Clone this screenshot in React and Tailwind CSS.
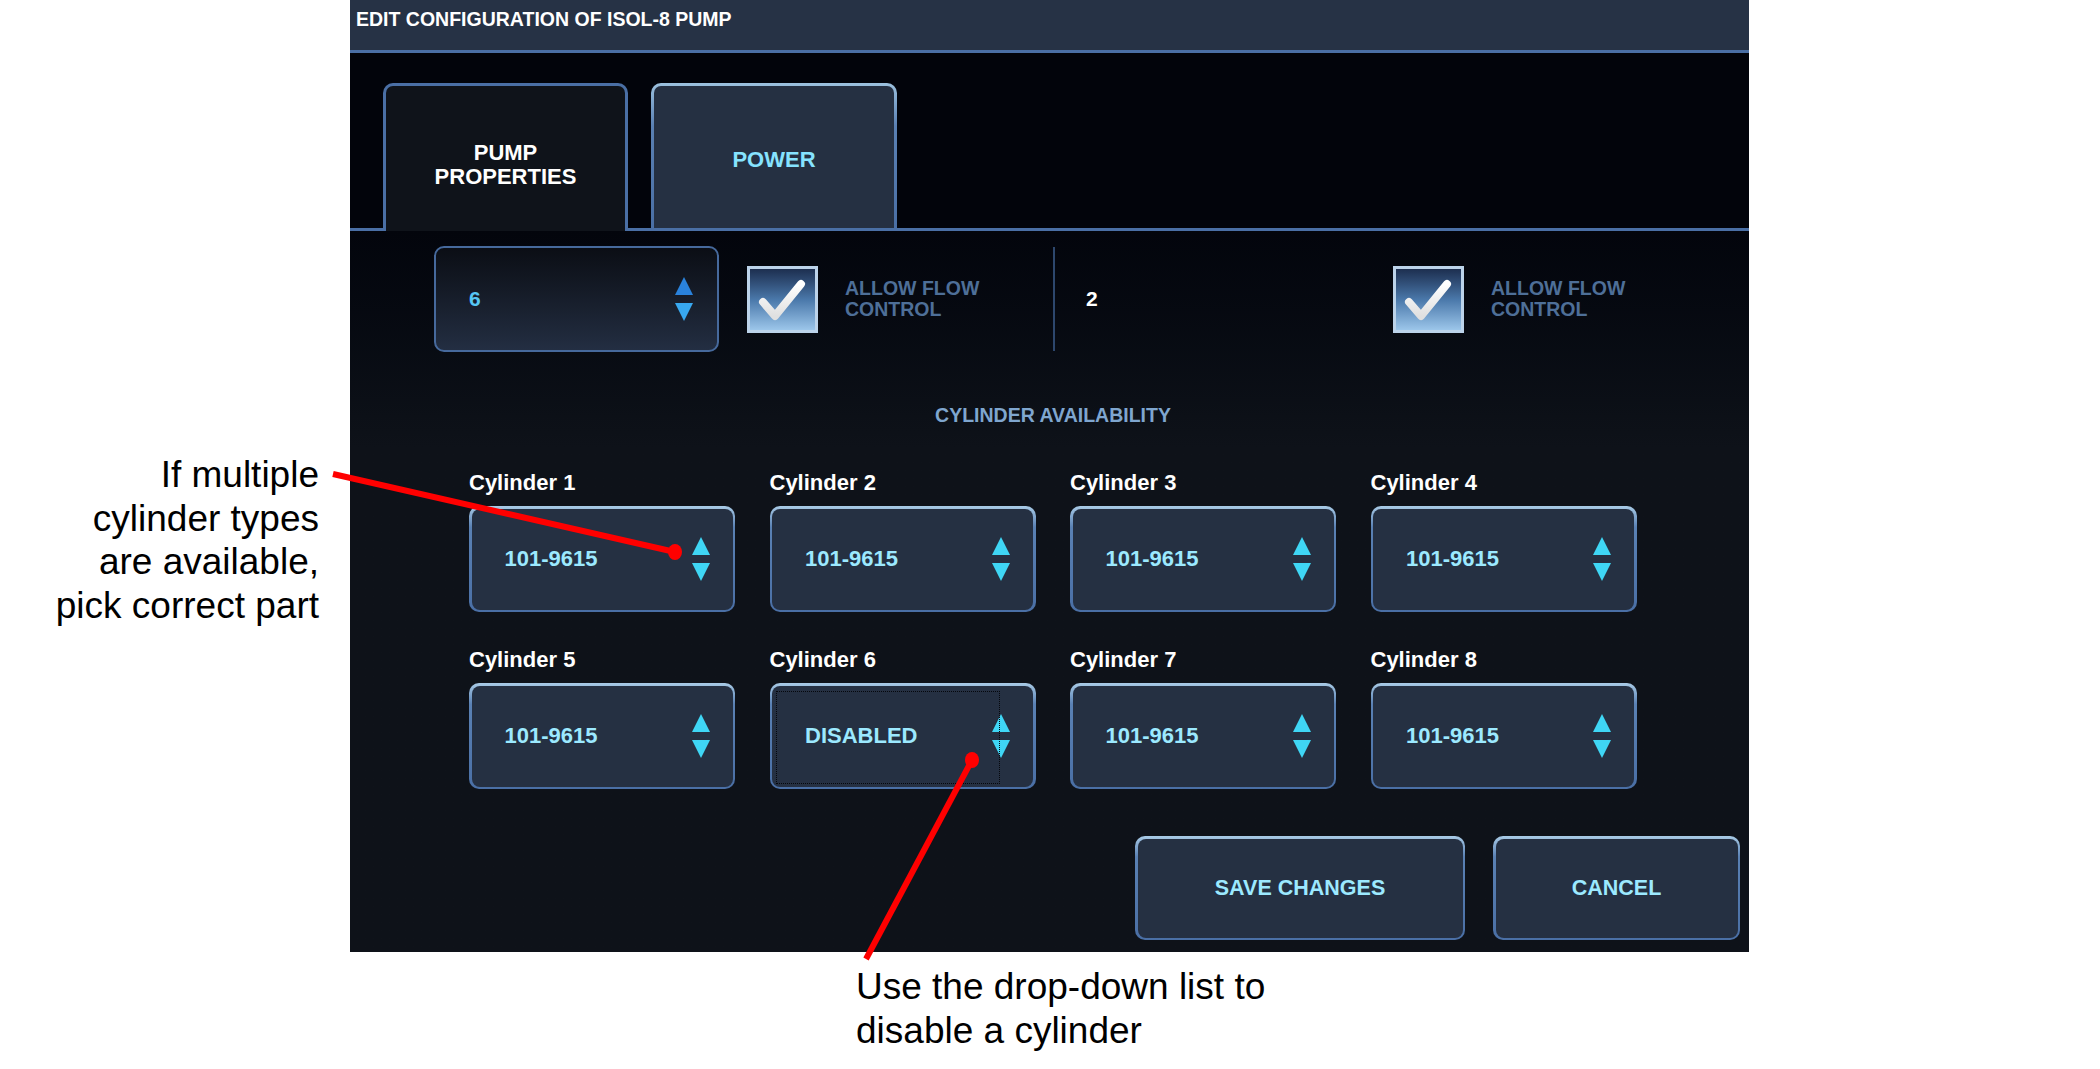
import React from "react";

function Arrows({ up = "#3fd6f5", down = "#3fd6f5" }) {
  return (
    <div className="flex flex-col items-center gap-[8px]">
      <svg width="18" height="18" viewBox="0 0 18 18">
        <polygon points="9,0 18,18 0,18" fill={up} />
      </svg>
      <svg width="18" height="18" viewBox="0 0 18 18">
        <polygon points="0,0 18,0 9,18" fill={down} />
      </svg>
    </div>
  );
}

function Sel({ value, focus }) {
  return (
    <div className="w-[266px] h-[106px] rounded-[10px] p-[2.5px] bg-linear-to-b from-[#a9cbe6] via-[#5a81b4] via-20% to-[#4a6fa5]">
      <div className="relative w-full h-full rounded-[8px] bg-[#253042] flex items-center pl-[33px] pr-[23px]">
        {focus && (
          <div className="absolute left-[4px] top-[5px] right-[33px] bottom-[3px] border border-dotted border-[#05070c]" />
        )}
        <span className="flex-1 text-[#9ce9ff] font-bold text-[22px] leading-[24px]">{value}</span>
        <Arrows />
      </div>
    </div>
  );
}

function Btn({ w, children }) {
  return (
    <div
      className={`${w} h-[104px] rounded-[10px] p-[2.5px] bg-linear-to-b from-[#a9cbe6] via-[#5a81b4] via-20% to-[#4a6fa5]`}
    >
      <div className="w-full h-full rounded-[8px] bg-[#253042] flex items-center justify-center text-[#9ce9ff] font-bold text-[21.5px] leading-[24px]">
        {children}
      </div>
    </div>
  );
}

function Check() {
  return (
    <div className="w-[71px] h-[67px] border-[3px] border-[#bcd3ea] bg-linear-to-b from-[#1d2f50] via-[#4a78aa] to-[#9cc6ea] shrink-0">
      <svg width="65" height="61" viewBox="0 0 65 61">
        <defs>
          <linearGradient id="ck" x1="0" y1="0" x2="0" y2="1">
            <stop offset="0" stopColor="#ffffff" />
            <stop offset="1" stopColor="#e0e0e0" />
          </linearGradient>
        </defs>
        <polyline
          points="13,33 25,47 51,15"
          fill="none"
          stroke="url(#ck)"
          strokeWidth="8"
          strokeLinecap="round"
          strokeLinejoin="round"
        />
      </svg>
    </div>
  );
}

export default function App() {
  const rows = [
    [
      ["Cylinder 1", "101-9615"],
      ["Cylinder 2", "101-9615"],
      ["Cylinder 3", "101-9615"],
      ["Cylinder 4", "101-9615"],
    ],
    [
      ["Cylinder 5", "101-9615"],
      ["Cylinder 6", "DISABLED", true],
      ["Cylinder 7", "101-9615"],
      ["Cylinder 8", "101-9615"],
    ],
  ];
  return (
    <div className="relative w-[2100px] h-[1069px] bg-white overflow-hidden font-['Liberation_Sans',Arial,sans-serif]">
      <div className="flex">
        <div className="w-[350px] pt-[453px] pr-[31px] text-right text-[37px] leading-[43.5px] text-black">
          If multiple
          <br />
          cylinder types
          <br />
          are available,
          <br />
          pick correct part
        </div>
        <div className="w-[1399px] h-[952px] flex flex-col bg-[#03050c]">
          <div className="h-[53px] shrink-0 bg-[#263245] border-b-[3px] border-[#4a6fa5] pl-[6px] pt-[7px] text-white font-bold text-[19.5px] leading-[24px]">
            EDIT CONFIGURATION OF ISOL-8 PUMP
          </div>
          <div className="h-[178px] shrink-0 flex items-end pl-[33px] gap-[23px] border-b-[3px] border-[#4a6fa5] bg-[#02040b]">
            <div className="w-[245px] h-[148px] mb-[-3px] rounded-t-[10px] border-[3px] border-b-0 border-[#4a6fa5] bg-[#0f131a] flex items-center justify-center pt-[12px] text-white font-bold text-[22px] leading-[24px] text-center">
              PUMP
              <br />
              PROPERTIES
            </div>
            <div className="w-[246px] h-[145px] rounded-t-[10px] p-[3px] pb-0 bg-linear-to-b from-[#9cc1de] via-[#5a80b3] via-30% to-[#4a6fa5]">
              <div className="w-full h-full rounded-t-[7px] bg-[#253042] flex items-center justify-center pt-[5px] text-[#86e3ff] font-bold text-[22px] leading-[24px]">
                POWER
              </div>
            </div>
          </div>
          <div className="flex-1 flex flex-col bg-linear-to-b from-[#03050c] to-[#0e1219] to-30%">
            <div className="mt-[15px] h-[106px] flex items-center pl-[84px]">
              <div className="w-[285px] h-[106px] rounded-[10px] border-2 border-[#46699c] bg-linear-to-b from-[#0b0e15] to-[#232e42] flex items-center pl-[33px] pr-[24px]">
                <span className="flex-1 text-[#56c6f4] font-bold text-[21px] leading-[24px]">6</span>
                <Arrows up="#2a82dc" down="#38a8f0" />
              </div>
              <div className="ml-[28px]">
                <Check />
              </div>
              <div className="ml-[27px] w-[208px] text-[#4e6f98] font-bold text-[19.5px] leading-[21px]">
                ALLOW FLOW
                <br />
                CONTROL
              </div>
              <div className="w-[2px] h-[104px] bg-[#2d476d]" />
              <div className="w-[338px] pl-[31px] text-white font-bold text-[21px] leading-[24px]">2</div>
              <Check />
              <div className="ml-[27px] text-[#4e6f98] font-bold text-[19.5px] leading-[21px]">
                ALLOW FLOW
                <br />
                CONTROL
              </div>
            </div>
            <div className="mt-[51px] h-[24px] pl-[7px] text-center text-[#7fa6cf] font-bold text-[19.5px] leading-[24px]">
              CYLINDER AVAILABILITY
            </div>
            <div className="mt-[44px] pl-[119px] flex flex-col gap-[36px]">
              {rows.map((r, i) => (
                <div key={i} className="flex gap-[34.5px]">
                  {r.map(([lab, val, f]) => (
                    <div key={lab} className="flex flex-col">
                      <div className="h-[24px] mb-[11px] text-white font-bold text-[22px] leading-[24px]">{lab}</div>
                      <Sel value={val} focus={f} />
                    </div>
                  ))}
                </div>
              ))}
            </div>
            <div className="mt-[47px] flex justify-end gap-[28px] pr-[9px]">
              <Btn w="w-[330px]">SAVE CHANGES</Btn>
              <Btn w="w-[247px]">CANCEL</Btn>
            </div>
          </div>
        </div>
      </div>
      <div className="pl-[856px] pt-[13px] text-[37px] leading-[43.5px] text-black">
        Use the drop-down list to
        <br />
        disable a cylinder
      </div>
      <svg className="absolute left-0 top-0 pointer-events-none" width="2100" height="1069">
        <line x1="333" y1="474" x2="675" y2="552" stroke="#ff0000" strokeWidth="6" />
        <ellipse cx="675" cy="552" rx="7" ry="8" fill="#ff0000" />
        <line x1="972" y1="760" x2="866" y2="959" stroke="#ff0000" strokeWidth="6" />
        <ellipse cx="972" cy="760" rx="7" ry="8" fill="#ff0000" />
      </svg>
    </div>
  );
}
